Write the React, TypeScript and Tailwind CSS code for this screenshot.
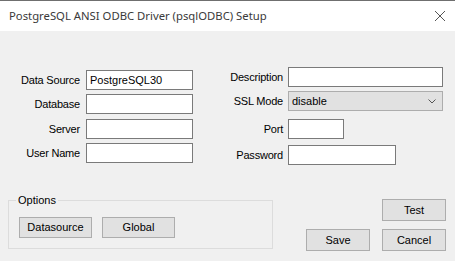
import React from 'react';

const inputCls = 'h-[20px] border border-[#7a7a7a] bg-white px-[3px] text-[11px] leading-[18px] text-black outline-none';
const btnCls = 'border border-[#adadad] bg-[#e1e1e1] text-[11px] text-black flex items-center justify-center';

function Row({ label, labelW, gap, children, className }: { label: string; labelW: string; gap: string; children: React.ReactNode; className?: string }) {
    return (
        <div className={`flex items-center ${className ?? ''}`}>
            <span className={`${labelW} ${gap} text-right text-[11px] tracking-[-0.2px] text-black`}>{label}</span>
            {children}
        </div>
    );
}

export default function App() {
    return (
        <div className="w-[455px] h-[261px] overflow-hidden font-['Liberation_Sans',Arial,sans-serif]">
            {/* title bar */}
            <div className="h-[31px] bg-white border-t border-[#6f6f6f] flex items-center justify-between pl-[9px] pr-[7px]">
                <span className="font-['Noto_Sans',sans-serif] text-[11.3px] text-[#3a3a3a]">PostgreSQL ANSI ODBC Driver (psqlODBC) Setup</span>
                <svg width="12" height="12" viewBox="0 0 12 12" className="mr-[2px]">
                    <path d="M1 1 L11 11 M11 1 L1 11" stroke="#555" strokeWidth="1" fill="none" />
                </svg>
            </div>

            <div className="h-[230px] bg-[#f0f0f0] pt-[36px]">
                <div className="flex">
                    {/* left column */}
                    <div className="flex flex-col mt-[3px]">
                        <Row label="Data Source" labelW="w-[80px]" gap="mr-[6px]">
                            <input className={`${inputCls} w-[107px]`} defaultValue="PostgreSQL30" />
                        </Row>
                        <Row label="Database" labelW="w-[80px]" gap="mr-[6px]" className="mt-[4px]">
                            <input className={`${inputCls} w-[107px]`} />
                        </Row>
                        <Row label="Server" labelW="w-[80px]" gap="mr-[6px]" className="mt-[5px]">
                            <input className={`${inputCls} w-[107px]`} />
                        </Row>
                        <Row label="User Name" labelW="w-[80px]" gap="mr-[6px]" className="mt-[4px]">
                            <input className={`${inputCls} w-[107px]`} />
                        </Row>
                    </div>

                    {/* right column */}
                    <div className="flex flex-col ml-[7px]">
                        <Row label="Description" labelW="w-[83px]" gap="mr-[5px]">
                            <input className={`${inputCls} w-[155px]`} />
                        </Row>
                        <Row label="SSL Mode" labelW="w-[83px]" gap="mr-[5px]" className="mt-[4px]">
                            <div className="h-[20px] w-[155px] border border-[#adadad] bg-[#e1e1e1] flex items-center justify-between pl-[3px] pr-[6px] text-[11px] text-black">
                                <span>disable</span>
                                <svg width="8" height="5" viewBox="0 0 8 5">
                                    <path d="M0.5 0.5 L4 4 L7.5 0.5" stroke="#555" strokeWidth="1" fill="none" />
                                </svg>
                            </div>
                        </Row>
                        <Row label="Port" labelW="w-[83px]" gap="mr-[5px]" className="mt-[8px]">
                            <input className={`${inputCls} w-[56px]`} />
                        </Row>
                        <Row label="Password" labelW="w-[83px]" gap="mr-[5px]" className="mt-[6px]">
                            <input type="password" className={`${inputCls} w-[108px]`} />
                        </Row>
                    </div>
                </div>

                {/* bottom */}
                <div className="flex mt-[34px]">
                    <div className="relative ml-[8px] mt-[1px] w-[265px] h-[49px] border border-[#dcdcdc] pt-[16px] pl-[10px] flex gap-[10px]">
                        <span className="absolute left-[7px] top-[-8px] px-[2px] bg-[#f0f0f0] text-[11px] leading-[14px] text-black">Options</span>
                        <button className={`${btnCls} w-[73px] h-[21px]`}>Datasource</button>
                        <button className={`${btnCls} w-[73px] h-[21px]`}>Global</button>
                    </div>
                    <div className="ml-auto mr-[9px] flex flex-col items-end">
                        <button className={`${btnCls} w-[64px] h-[22px]`}>Test</button>
                        <div className="flex gap-[12px] mt-[8px]">
                            <button className={`${btnCls} w-[64px] h-[22px]`}>Save</button>
                            <button className={`${btnCls} w-[64px] h-[22px]`}>Cancel</button>
                        </div>
                    </div>
                </div>
            </div>
        </div>
    );
}
